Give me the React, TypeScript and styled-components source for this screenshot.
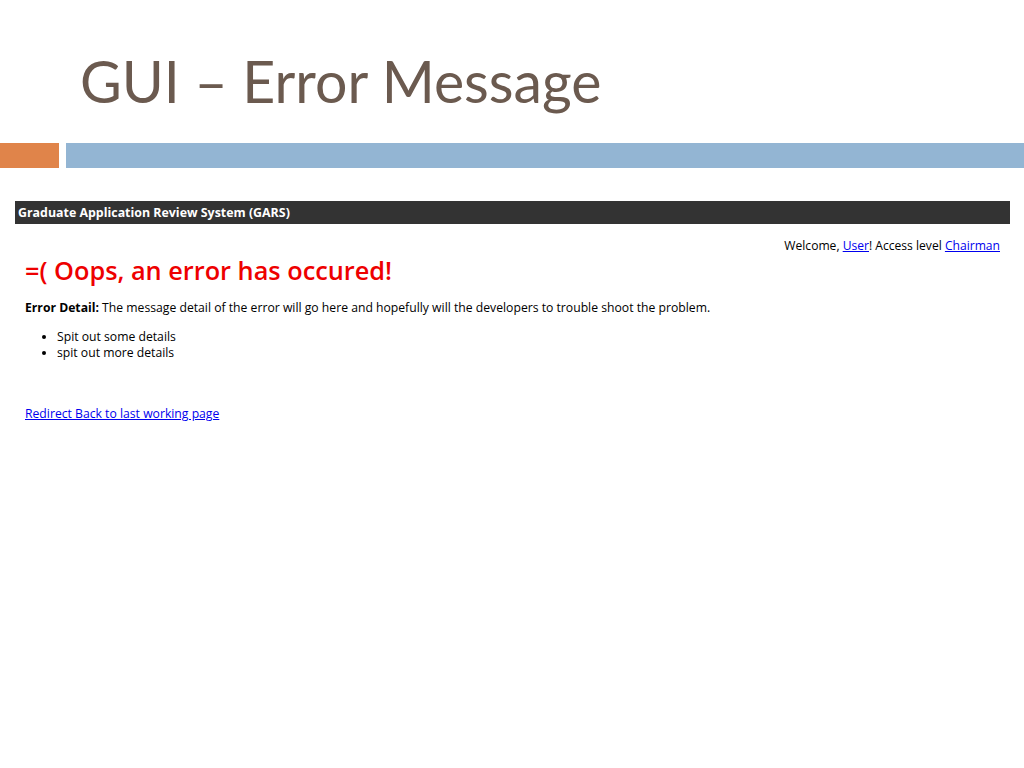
import React from "react";
import styled, { createGlobalStyle } from "styled-components";

const Global = createGlobalStyle`
  html, body { margin: 0; padding: 0; background: #ffffff; }
  #root { width: 1024px; height: 768px; }
`;

const Slide = styled.div`
  width: 1024px;
  height: 768px;
  background: #ffffff;
  display: flex;
  flex-direction: column;
  overflow: hidden;
`;

const Title = styled.h1`
  margin: 0;
  padding: 46px 0 0 80px;
  height: 143px;
  box-sizing: border-box;
  font-family: "Lato", sans-serif;
  font-weight: 400;
  font-size: 57.2px;
  line-height: 70px;
  color: #6b5a4f;
`;

const AccentRow = styled.div`
  display: flex;
  gap: 7px;
  height: 25px;
  flex: none;
`;

const AccentBlock = styled.div<{ $color: string; $width?: number }>`
  background: ${(p) => p.$color};
  ${(p) => (p.$width ? `width: ${p.$width}px; flex: none;` : "flex: 1;")}
`;

const Shot = styled.div`
  margin: 33px 14px 0 15px;
  font-family: "Open Sans", sans-serif;
  color: #000;
`;

const AppBar = styled.div`
  height: 23px;
  background: #333333;
  color: #ffffff;
  font-weight: 700;
  font-size: 12.4px;
  line-height: 23px;
  padding-left: 3px;
`;

const Content = styled.div`
  padding: 0 10px;
`;

const Welcome = styled.div`
  text-align: right;
  font-size: 12.1px;
  line-height: 16px;
  margin-top: 14px;
`;

const Link = styled.a`
  color: #0000ee;
  text-decoration: underline;
`;

const ErrorHeading = styled.h2`
  margin: 0;
  color: #ee0000;
  font-weight: 600;
  font-size: 25.3px;
  line-height: 32px;
`;

const Detail = styled.p`
  margin: 13px 0 0 0;
  font-size: 12.2px;
  line-height: 17px;
`;

const Strong = styled.strong`
  font-weight: 700;
`;

const List = styled.ul`
  margin: 13px 0 0 0;
  padding-left: 32px;
  font-size: 12.2px;
  line-height: 16px;
`;

const Redirect = styled.div`
  margin-top: 45px;
  font-size: 12.2px;
  line-height: 16px;
`;

export default function App() {
  return (
    <>
      <Global />
      <Slide>
        <Title>GUI – Error Message</Title>
        <AccentRow>
          <AccentBlock $color="#e0844a" $width={59} />
          <AccentBlock $color="#93b5d3" />
        </AccentRow>
        <Shot>
          <AppBar>Graduate Application Review System (GARS)</AppBar>
          <Content>
            <Welcome>
              Welcome, <Link href="#">User</Link>! Access level <Link href="#">Chairman</Link>
            </Welcome>
            <ErrorHeading>=( Oops, an error has occured!</ErrorHeading>
            <Detail>
              <Strong>Error Detail:</Strong> The message detail of the error will go here and hopefully will the developers to trouble shoot the problem.
            </Detail>
            <List>
              <li>Spit out some details</li>
              <li>spit out more details</li>
            </List>
            <Redirect>
              <Link href="#">Redirect Back to last working page</Link>
            </Redirect>
          </Content>
        </Shot>
      </Slide>
    </>
  );
}
